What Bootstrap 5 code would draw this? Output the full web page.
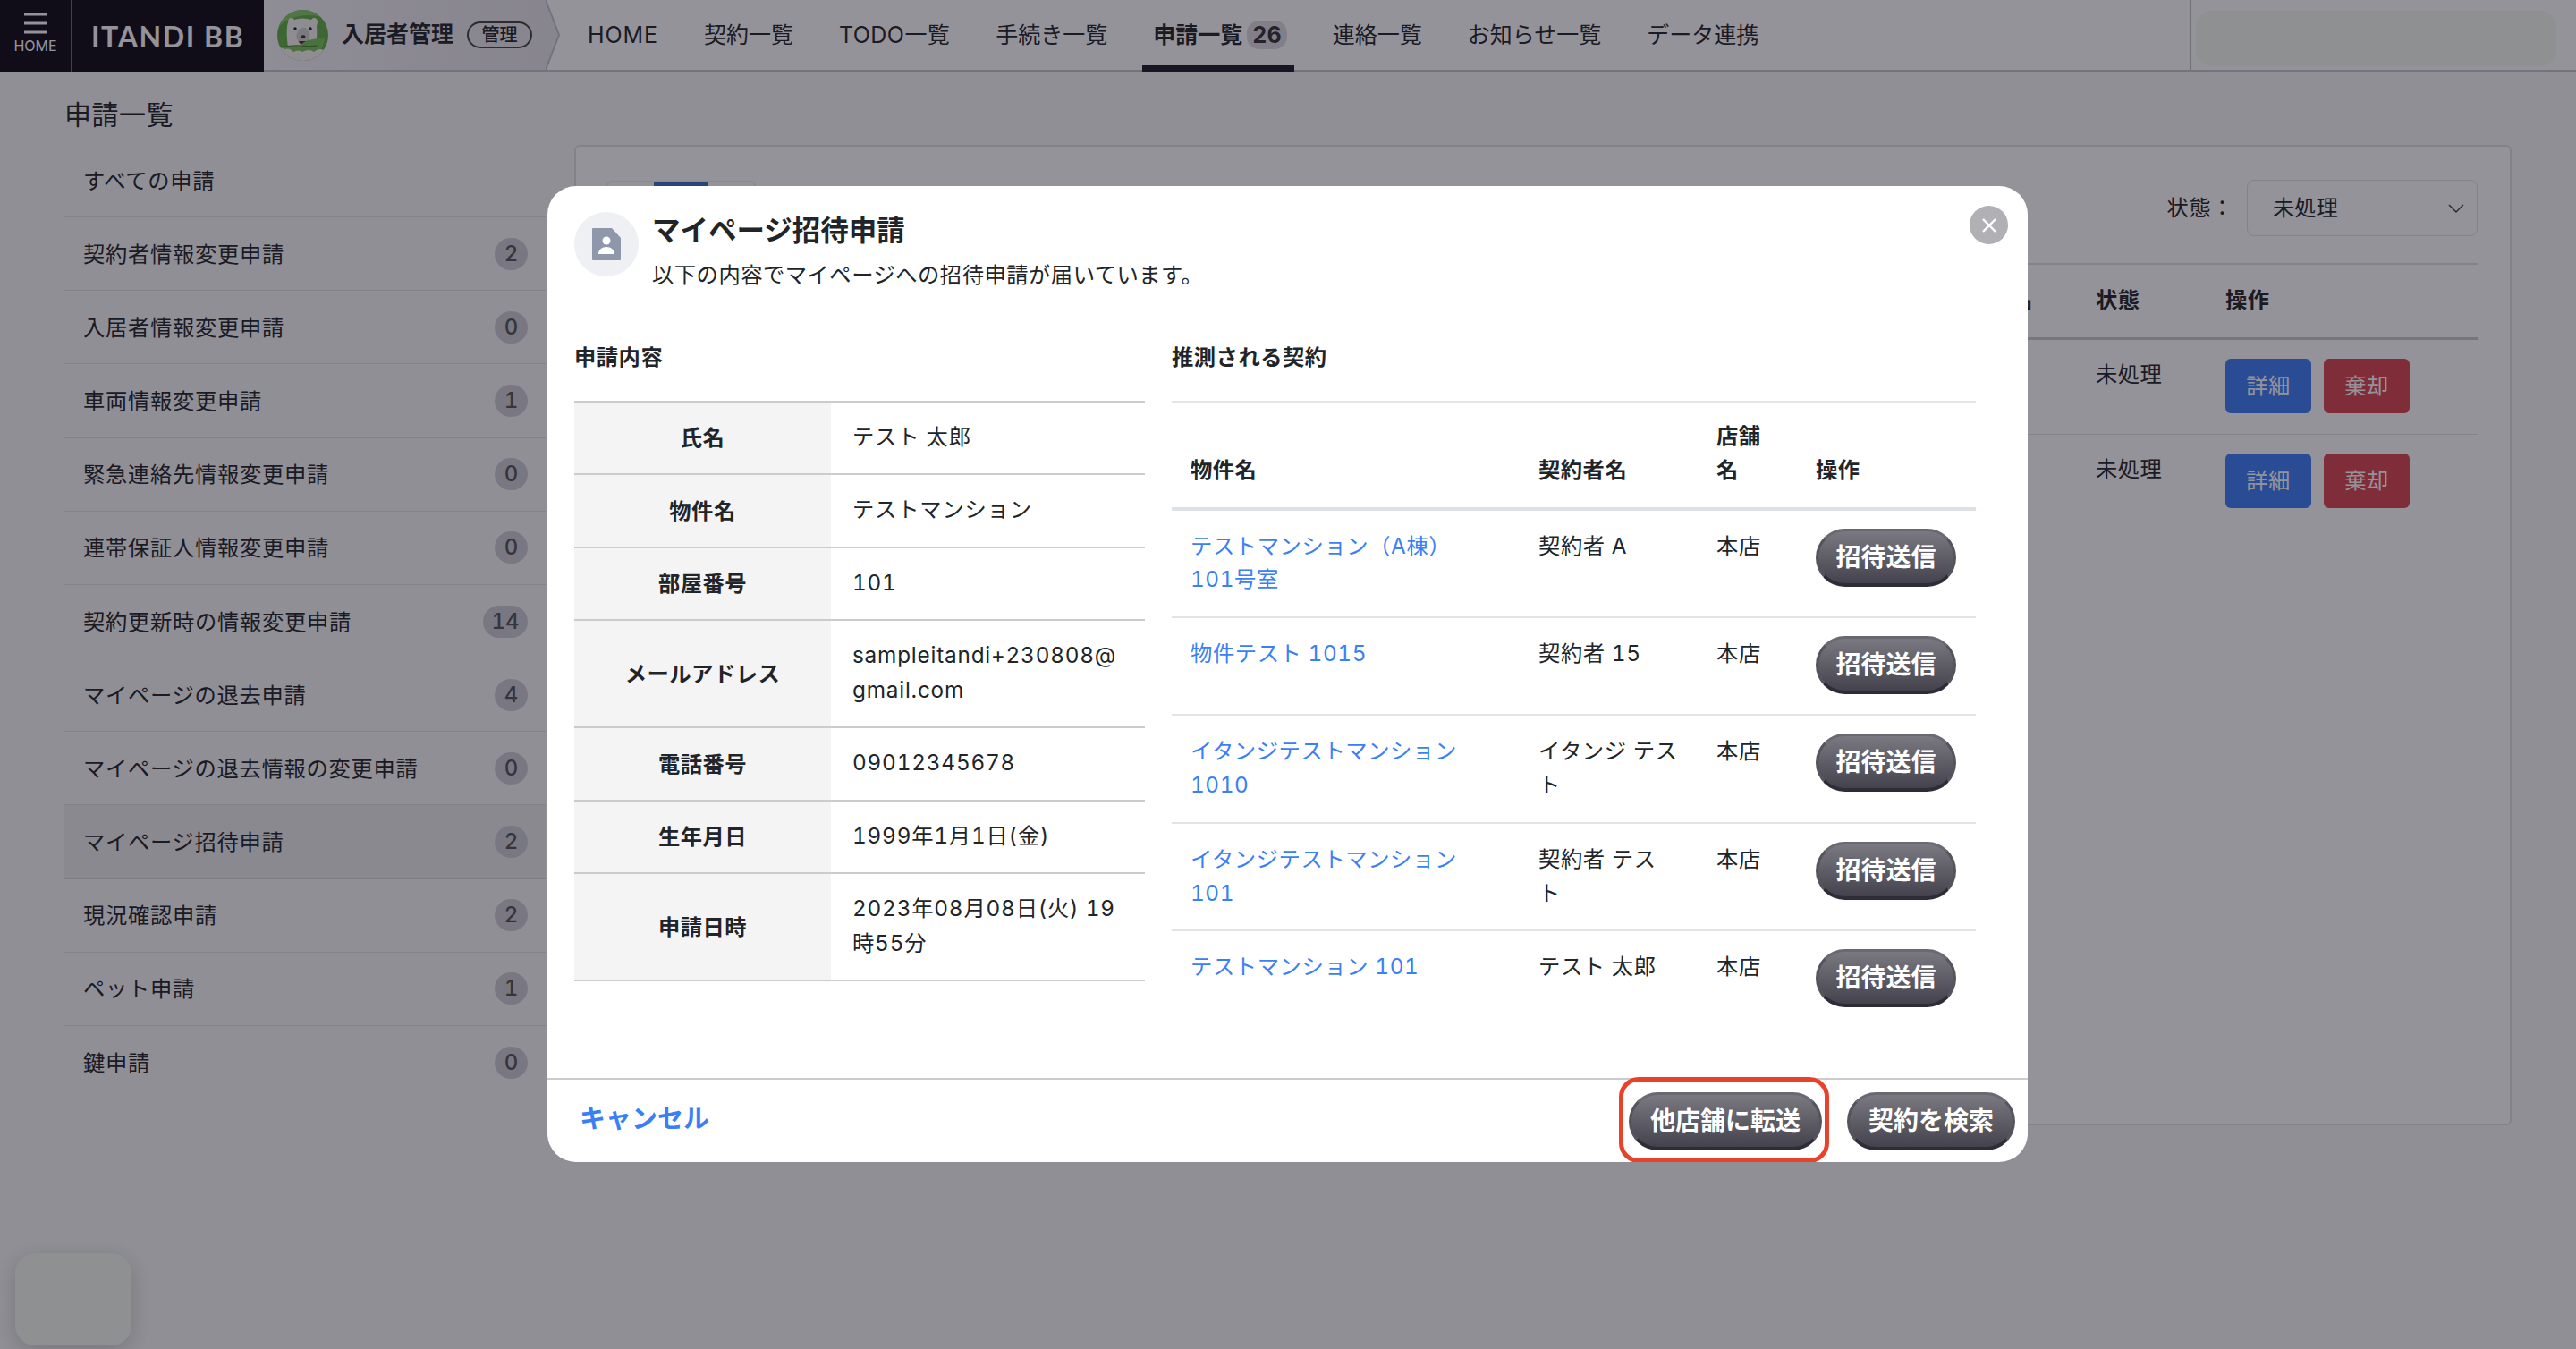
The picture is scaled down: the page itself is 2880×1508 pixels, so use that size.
<!DOCTYPE html>
<html lang="ja">
<head>
    <meta charset="UTF-8">
    <meta name="viewport" content="width=device-width, initial-scale=1.0">
    <link rel="stylesheet" href="https://cdn.jsdelivr.net/npm/bootstrap@5.3.3/dist/css/bootstrap.min.css">
    <script defer src="https://cdn.jsdelivr.net/npm/bootstrap@5.3.3/dist/js/bootstrap.bundle.min.js"></script>
    <style>
        html, body { height: 1508px; overflow: hidden; }
        body {
            position: relative;
            background: #f8f8f8;
            color: #212529;
            font-family: "Inter", "Noto Sans CJK JP", sans-serif;
            font-size: 24.3px;
            line-height: 37.8px;
            letter-spacing: .5px;
            font-variant-numeric: tabular-nums;
        }

        /* top bar */
        .topbar { height: 80px; background: #fff; border-bottom: 2px solid #c4c4c8; }
        .homeCell { width: 80px; height: 80px; background: #0e0b14; border-right: 1px solid #6b6b70; color: #fff; font-size: 16px; line-height: 18px; letter-spacing: 0; padding-top: 14px; }
        .logoCell { width: 215px; height: 80px; background: #0e0b14; color: #fff; font-family: "Lato", sans-serif; font-weight: 700; font-size: 32px; letter-spacing: .05em; padding-left: 22px; line-height: 82px; }
        .appCell { width: 315px; height: 78px; background: linear-gradient(90deg, #f4f4f6, #e6e5e9); padding-left: 15px; }
        .appName { font-weight: 700; font-size: 25px; letter-spacing: 0; margin-left: 15px; }
        .appTag { border: 2px solid #444; border-radius: 15px; font-size: 20px; line-height: 26px; font-weight: 500; width: 73px; text-align: center; margin-left: 15px; letter-spacing: 0; }
        .navLinks { gap: 51px; margin-left: 31px; }
        .navLink { height: 78px; line-height: 78px; font-size: 25px; color: #212529; text-decoration: none; position: relative; letter-spacing: 0; white-space: nowrap; }
        .navLink.spaced { letter-spacing: .9px; }
        .navLink.todo { letter-spacing: .45px; }
        .navLink.on { font-weight: 700; }
        .navLink.on::after { content: ""; position: absolute; left: -12px; right: -8px; bottom: -2px; height: 7px; background: #1d1a28; }
        .navCount { display: inline-block; background: #dcdbe0; border-radius: 14px; line-height: 32px; height: 32px; padding: 0 6px; margin-left: 5px; color: #333; }
        .rightCell { position: absolute; left: 2448px; top: 0; right: 0; height: 78px; border-left: 2px solid #bdbdc2; }
        .topBlob { position: absolute; left: 5px; right: 22px; top: 12px; height: 62px; background: #f5f9ee; border-radius: 18px; }

        /* page */
        .side { width: 538px; margin-left: 72px; }
        .pageTitle { font-size: 30px; font-weight: 400; line-height: 40px; margin: 28px 0 13px 0; letter-spacing: .5px; }
        .sideList .list-group-item { height: 82.17px; padding: 0 20px 0 21px; background: transparent; border-color: #dfdfe2; font-size: 24.3px; color: #212529; line-height: 78px; letter-spacing: .7px; }
        .sideList .list-group-item.picked { background: #ededed; border-radius: 0; border-bottom-color: #d4d4d8; }
        .sideCount { width: 37px; height: 36px; padding: 0; line-height: 36px; font-size: 24px; font-weight: 500; background: #cdcdd1; color: #555; letter-spacing: 0; }
        .sideCount.wide { width: 50px; }
        .mainCard { position: absolute; left: 642px; top: 162px; width: 2166px; height: 1096px; background: #fff; border: 2px solid #dfdfe2; border-radius: 6px; padding: 38px 36px 0; }
        .tabStub { position: absolute; left: 34px; top: 38px; height: 60px; width: 167px; border: 2px solid #ececee; border-radius: 6px; }
        .tabStub i { display: block; width: 61px; height: 8px; margin-left: 51px; background: #3b6fc2; }
        .statusBar { height: 94px; padding-bottom: 31px; border-bottom: 2px solid #dfdfe2; }
        .statusBar .form-select { width: 258px; height: 63px; margin-left: 15px; font-size: 24.3px; padding: 0 28px; border-radius: 8px; background-image: url("data:image/svg+xml,%3csvg xmlns='http://www.w3.org/2000/svg' viewBox='0 0 18 10'%3e%3cpath fill='none' stroke='%23343a40' stroke-width='1.4' d='M1 1l8 8 8-8'/%3e%3c/svg%3e"); background-size: 18px 10px; background-position: right 14px center; }
        .bgTable { margin: 0; table-layout: fixed; background: transparent; }
        .bgTable th, .bgTable td { background: transparent; padding: 20px 0 0; height: 107px; white-space: nowrap; }
        .bgTable thead th { height: 82px; border-bottom: 3px solid #c8c8cc; padding: 0; vertical-align: middle; }
        .bgTable tr:last-child td { border-bottom: 0; }
        .bgTable .stateCell { padding-left: 70px; }
        .smallBtn { width: 96px; height: 61px; padding: 0; font-size: 24.3px; border-radius: 6px; border: 0; margin-right: 14px; color: #fff; letter-spacing: .5px; }
        .blueBtn { background: #3b7ff5; }
        .redBtn { background: #d94650; }
        .bgOperate { padding-top: 21px !important; }

        .chatBlob { position: absolute; left: 17px; top: 1401px; width: 130px; height: 103px; background: #f5f9ee; border-radius: 22px; box-shadow: 0 6px 24px rgba(0,0,0,.18); }

        .dimmer { position: absolute; inset: 0; background: rgba(20,15,30,.45); }

        /* modal */
        .inviteModal { position: absolute; left: 612px; top: 208px; width: 1655px; height: 1091px; border: 0; border-radius: 32px; overflow: hidden; background: #fff; }
        .inviteHead { padding: 29px 30px 0; height: 168px; gap: 15px; }
        .iconDisc { width: 72px; height: 72px; border-radius: 50%; background: #eef0f4; flex: none; }
        .inviteTitle { font-size: 31.5px; font-weight: 700; line-height: 40px; margin: 1px 0 0; letter-spacing: 0; }
        .inviteSub { font-size: 24.3px; line-height: 38px; margin: 10px 0 0; }
        .closeBtn { position: absolute; right: 22px; top: 22px; width: 43px; height: 43px; border-radius: 50%; background: #b1b0b5; border: 0; padding: 0; }
        .inviteBody { padding: 0 58px 0 30px; gap: 30px; }
        .secTitle { font-size: 24.3px; font-weight: 700; line-height: 38px; margin: 4px 0 30px; }
        .leftCol { width: 638px; }
        .rightCol { width: 899px; }
        .infoTable { margin: 0; table-layout: fixed; border-top: 2px solid #ccc; }
        .infoTable th, .infoTable td { padding: 19px 24px 21.800px; border-bottom: 2px solid #ccc; vertical-align: top; line-height: 38.6px; }
        .infoTable td { letter-spacing: .8px; }
        .infoTable th { width: 287px; background: #f4f4f4; text-align: center; vertical-align: middle; font-weight: 700; padding: 0; letter-spacing: .5px; }
        .matchTable { margin: 0; table-layout: fixed; border-top: 2px solid #e4e5e8; }
        .matchTable th { padding: 19px 21px 22px; vertical-align: bottom; border-bottom: 4px solid #dee2e6; font-weight: 700; }
        .matchTable td { padding: 21px 21px 22px; vertical-align: top; border-bottom: 2px solid #e2e3e6; letter-spacing: .6px; }
        .matchTable tr:last-child td { border-bottom: 0; }
        .matchTable a { color: #3b7ff5; text-decoration: none; }
        .darkBtn { background: linear-gradient(#7a7880, #44424c); border: 0; border-left: 3px solid #55535c; border-right: 3px solid #55535c; border-bottom: 4px solid #2e2c36; border-top: 3px solid #6a6870; border-radius: 33px; color: #fff; font-size: 28px; font-weight: 700; height: 65px; padding: 0; letter-spacing: 0; line-height: 54px; }
        .darkBtn.send { width: 157px; margin: -1px 0 0 0; }
        .inviteFoot { position: absolute; left: 0; right: 0; bottom: 0; height: 94px; border-top: 2px solid #ccc; padding: 0 14px 0 36px; }
        .cancelLink { color: #3b7ff5; font-size: 29px; font-weight: 700; text-decoration: none; letter-spacing: 0; margin-top: -4px; }
        .flagBox { position: relative; margin-right: 28px; }
        .flagBox::after { content: ""; position: absolute; left: -11px; right: -8px; top: -17px; bottom: -14px; border: 5px solid #e8432a; border-radius: 22px; }
    </style>
    <title>申請一覧</title>
</head>

<body>
    <div class="topbar d-flex">
        <div class="homeCell d-flex flex-column align-items-center">
            <svg width="26" height="24" viewBox="0 0 26 24"><path d="M0 2h26M0 12h26M0 22h26" stroke="#fff" stroke-width="3"/></svg>
            <span style="margin-top:4px">HOME</span>
        </div>
        <div class="logoCell">ITANDI BB</div>
        <div class="appCell d-flex align-items-center">
            <svg width="57" height="57" viewBox="0 0 57 57">
                <defs><clipPath id="bearClip"><circle cx="28.5" cy="28.5" r="28.5"/></clipPath></defs>
                <g clip-path="url(#bearClip)">
                    <rect width="57" height="57" fill="#5fae43"/>
                    <path d="M0 20C14 6 34 2 57 10L57 0H0z" fill="#82cb65"/>
                    <path d="M12 14q0-5 4-5 2 0 3 2 9-3 19 0 1-2 3-2 4 0 4 5l-1 4q1 10-1 24H12q-2-14-1-24z" fill="#f4f4f0"/>
                    <ellipse cx="29" cy="29" rx="7.500" ry="9.500" fill="#d2d2cc"/>
                    <circle cx="20" cy="21" r="1.700" fill="#222"/><circle cx="37" cy="21" r="1.700" fill="#222"/>
                    <ellipse cx="29" cy="30" rx="2.500" ry="1.700" fill="#333"/>
                    <path d="M24 35h10q-1 4-5 4t-5-4z" fill="#5a2d2d"/>
                    <path d="M4 42q14-3 22-2 4-8 27-8-1 8-6 15H9z" fill="#78c258"/>
                    <path d="M4 42q14-3 22-2 10 1 20 0" fill="none" stroke="#3f8a2c" stroke-width="1.200"/>
                    <path d="M0 44q5-3 8 0 6-2 10 3 6-3 10 0 8-4 13 0 6-6 16 0v10H0z" fill="#f4f4f0"/>
                </g>
            </svg>
            <span class="appName">入居者管理</span>
            <span class="appTag">管理</span>
        </div>
        <svg width="16" height="78" viewBox="0 0 16 78"><path d="M0 0l15 39L0 78z" fill="#e6e5e9"/><path d="M0 0l15 39L0 78" fill="none" stroke="#c4c4c8" stroke-width="2"/></svg>
        <nav class="navLinks d-flex">
            <a class="navLink spaced" href="#">HOME</a>
            <a class="navLink" href="#">契約一覧</a>
            <a class="navLink todo" href="#">TODO一覧</a>
            <a class="navLink" href="#">手続き一覧</a>
            <a class="navLink on" href="#">申請一覧<span class="navCount">26</span></a>
            <a class="navLink" href="#">連絡一覧</a>
            <a class="navLink" href="#">お知らせ一覧</a>
            <a class="navLink" href="#">データ連携</a>
        </nav>
        <div class="rightCell"><div class="topBlob"></div></div>
    </div>

    <div class="side">
        <h1 class="pageTitle">申請一覧</h1>
        <div class="list-group list-group-flush sideList" id="sideList"></div>
    </div>

    <div class="mainCard">
        <div class="tabStub"><i></i></div>
        <div class="statusBar d-flex justify-content-end align-items-center">
            <span>状態：</span>
            <select class="form-select"><option>未処理</option></select>
        </div>
        <table class="table bgTable">
            <colgroup><col style="width:1593px"><col style="width:145px"><col></colgroup>
            <thead><tr><th class="text-end">申請者名</th><th class="stateCell">状態</th><th class="stateCell">操作</th></tr></thead>
            <tbody>
                <tr><td></td><td class="stateCell">未処理</td><td class="bgOperate stateCell"><button class="btn smallBtn blueBtn">詳細</button><button class="btn smallBtn redBtn">棄却</button></td></tr>
                <tr><td></td><td class="stateCell">未処理</td><td class="bgOperate stateCell"><button class="btn smallBtn blueBtn">詳細</button><button class="btn smallBtn redBtn">棄却</button></td></tr>
            </tbody>
        </table>
    </div>

    <div class="chatBlob"></div>
    <div class="dimmer"></div>

    <div class="modal-content inviteModal">
        <div class="inviteHead d-flex">
            <div class="iconDisc d-flex align-items-center justify-content-center">
                <svg width="32" height="36" viewBox="0 0 32 36"><path d="M1 0h21l10 11v24a1 1 0 0 1-1 1H1a1 1 0 0 1-1-1V1a1 1 0 0 1 1-1z" fill="#8f97ab"/><circle cx="16" cy="14" r="4.500" fill="#fff"/><path d="M7 29c0-5 4-8 9-8s9 3 9 8z" fill="#fff"/></svg>
            </div>
            <div>
                <h2 class="inviteTitle">マイページ招待申請</h2>
                <p class="inviteSub">以下の内容でマイページへの招待申請が届いています。</p>
            </div>
        </div>
        <button class="closeBtn d-flex align-items-center justify-content-center" aria-label="閉じる">
            <svg width="18" height="18" viewBox="0 0 18 18"><path d="M2 2l14 14M16 2L2 16" stroke="#fff" stroke-width="2.400"/></svg>
        </button>
        <div class="inviteBody d-flex">
            <div class="leftCol">
                <div class="secTitle">申請内容</div>
                <table class="table infoTable">
                    <tbody>
                        <tr><th>氏名</th><td>テスト 太郎</td></tr>
                        <tr><th>物件名</th><td>テストマンション</td></tr>
                        <tr><th>部屋番号</th><td>101</td></tr>
                        <tr><th>メールアドレス</th><td>sampleitandi+230808@<br>gmail.com</td></tr>
                        <tr><th>電話番号</th><td>09012345678</td></tr>
                        <tr><th>生年月日</th><td>1999年1月1日(金)</td></tr>
                        <tr><th>申請日時</th><td>2023年08月08日(火) 19<br>時55分</td></tr>
                    </tbody>
                </table>
            </div>
            <div class="rightCol">
                <div class="secTitle">推測される契約</div>
                <table class="table matchTable">
                    <colgroup><col style="width:389px"><col style="width:199px"><col style="width:111px"><col></colgroup>
                    <thead><tr><th>物件名</th><th>契約者名</th><th>店舗名</th><th>操作</th></tr></thead>
                    <tbody>
                        <tr><td><a href="#">テストマンション（A棟）<br>101号室</a></td><td>契約者 A</td><td>本店</td><td><button class="btn darkBtn send">招待送信</button></td></tr>
                        <tr><td><a href="#">物件テスト 1015</a></td><td>契約者 15</td><td>本店</td><td><button class="btn darkBtn send">招待送信</button></td></tr>
                        <tr><td><a href="#">イタンジテストマンション<br>1010</a></td><td>イタンジ テス<br>ト</td><td>本店</td><td><button class="btn darkBtn send">招待送信</button></td></tr>
                        <tr><td><a href="#">イタンジテストマンション<br>101</a></td><td>契約者 テス<br>ト</td><td>本店</td><td><button class="btn darkBtn send">招待送信</button></td></tr>
                        <tr><td><a href="#">テストマンション 101</a></td><td>テスト 太郎</td><td>本店</td><td><button class="btn darkBtn send">招待送信</button></td></tr>
                    </tbody>
                </table>
            </div>
        </div>
        <div class="inviteFoot d-flex align-items-center">
            <a class="cancelLink me-auto" href="#">キャンセル</a>
            <span class="flagBox"><button class="btn darkBtn" style="width:216px">他店舗に転送</button></span>
            <button class="btn darkBtn" style="width:188px">契約を検索</button>
        </div>
    </div>

    <script>
        const items = [
            ["すべての申請", null], ["契約者情報変更申請", 2], ["入居者情報変更申請", 0], ["車両情報変更申請", 1],
            ["緊急連絡先情報変更申請", 0], ["連帯保証人情報変更申請", 0], ["契約更新時の情報変更申請", 14],
            ["マイページの退去申請", 4], ["マイページの退去情報の変更申請", 0], ["マイページ招待申請", 2],
            ["現況確認申請", 2], ["ペット申請", 1], ["鍵申請", 0]
        ];
        const sideList = document.getElementById("sideList");
        items.forEach(([name, count]) => {
            const row = document.createElement("a");
            row.href = "#";
            row.className = "list-group-item d-flex justify-content-between align-items-center" + (name === "マイページ招待申請" ? " picked" : "");
            row.append(name);
            if (count !== null) {
                const badge = document.createElement("span");
                badge.className = "badge rounded-pill sideCount" + (count > 9 ? " wide" : "");
                badge.textContent = count;
                row.appendChild(badge);
            }
            sideList.appendChild(row);
        });
    </script>
</body>
</html>
